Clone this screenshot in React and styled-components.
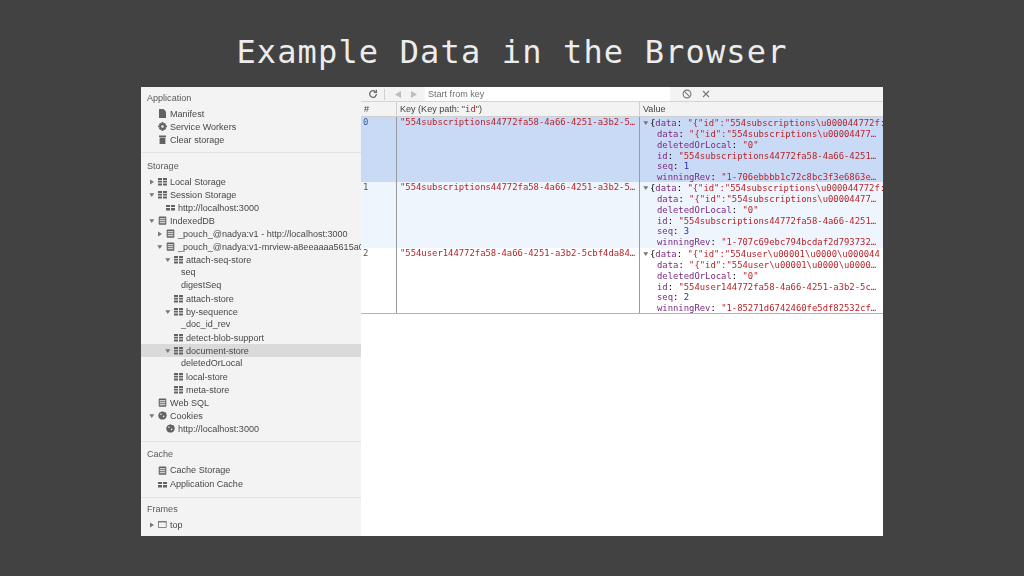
import React from 'react';
import styled, { createGlobalStyle } from 'styled-components';

const Global = createGlobalStyle`
  html, body { margin: 0; padding: 0; background: #424242; }
`;

const Page = styled.div`
  width: 1024px;
  height: 576px;
  overflow: hidden;
  display: flex;
  flex-direction: column;
  align-items: center;
  background: #424242;
`;

const Title = styled.h1`
  margin: 0;
  height: 87px;
  padding-top: 32px;
  box-sizing: border-box;
  font: 400 32px/40px "DejaVu Sans Mono", monospace;
  letter-spacing: 1.15px;
  color: #ececec;
  white-space: pre;
`;

const Window = styled.div`
  width: 742px;
  height: 449px;
  display: flex;
  background: #fff;
  overflow: hidden;
  filter: blur(0.45px);
`;

const Sidebar = styled.div`
  width: 220px;
  flex: none;
  background: #f3f3f3;
  font: 9.05px "Liberation Sans", sans-serif;
  color: #484848;
  overflow: hidden;
`;

const Section = styled.div`
  padding-bottom: 6px;
  border-bottom: ${p => (p.$last ? 'none' : '1px solid #e2e2e2')};
`;

const SectionLabel = styled.div`
  height: 13px;
  line-height: 13px;
  padding-left: 6px;
  margin: ${p => p.$top}px 0 ${p => p.$bottom}px;
  color: #5a5a5a;
`;

const Row = styled.div`
  height: ${p => p.$h || 13}px;
  display: flex;
  align-items: center;
  padding-left: ${p => 8 + p.$level * 8}px;
  white-space: nowrap;
  background: ${p => (p.$active ? '#dadada' : 'transparent')};
`;

const Caret = styled.span`
  width: 9px;
  flex: none;
  display: flex;
  align-items: center;
  color: #777;
`;

const IconSlot = styled.span`
  width: 9px;
  margin-right: 3px;
  flex: none;
  display: flex;
  align-items: center;
  color: #626262;
`;

const FieldRow = styled.div`
  height: 13px;
  line-height: 13px;
  padding-left: 40px;
  white-space: nowrap;
`;

const Main = styled.div`
  flex: 1;
  min-width: 0;
  display: flex;
  flex-direction: column;
`;

const Toolbar = styled.div`
  height: 15px;
  box-sizing: border-box;
  flex: none;
  display: flex;
  align-items: center;
  background: #f3f3f3;
  border-bottom: 1px solid #d4d4d4;
  color: #666;
`;

const ToolButton = styled.span`
  width: ${p => p.$w}px;
  flex: none;
  display: flex;
  justify-content: center;
  align-items: center;
`;

const ToolDivider = styled.span`
  width: 1px;
  height: 11px;
  background: #d0d0d0;
  flex: none;
`;

const KeyInput = styled.div`
  width: 245px;
  height: 14px;
  flex: none;
  background: #fff;
  padding-left: 3px;
  box-sizing: border-box;
  font: 9.05px/14px "Liberation Sans", sans-serif;
  color: #6e6e6e;
`;

const Grid = styled.div`
  display: grid;
  grid-template-columns: 36px 243px 1fr;
`;

const HeadCell = styled.div`
  height: 15px;
  box-sizing: border-box;
  padding-left: ${p => p.$pl}px;
  background: #f3f3f3;
  border-bottom: 1px solid #cfcfcf;
  border-right: ${p => (p.$end ? 'none' : '1px solid #cfcfcf')};
  font: 9.05px/14px "Liberation Sans", sans-serif;
  color: #444;
  white-space: nowrap;
`;

const HeadKey = styled.span`
  font: 400 8.9px/14px "DejaVu Sans Mono", monospace;
  color: #b8242a;
`;

const Cell = styled.div`
  height: ${p => p.$h}px;
  box-sizing: border-box;
  overflow: hidden;
  white-space: pre;
  background: ${p => p.$bg};
  border-right: ${p => (p.$end ? 'none' : '1px solid #9a9a9a')};
  padding-left: ${p => p.$pl}px;
  font: 8.9px/11px "DejaVu Sans Mono", monospace;
`;

const IndexText = styled.span`
  color: ${p => p.$color};
`;

const Str = styled.span`
  color: #b8242a;
`;

const Prop = styled.span`
  color: #7a2a80;
`;

const Num = styled.span`
  color: #2a1ec0;
`;

const Line = styled.div`
  height: ${p => p.$h || 10.8}px;
  line-height: ${p => p.$h || 10.8}px;
  padding-left: ${p => p.$pl}px;
  display: flex;
  align-items: center;
  overflow: hidden;
`;

const ValueCaret = styled.span`
  width: 7px;
  flex: none;
  display: flex;
  color: #777;
`;

const TableEnd = styled.div`
  height: 1px;
  background: #b5b5b5;
`;

const Empty = styled.div`
  flex: 1;
  background: #fff;
`;

const CaretIcon = ({ open }) => (
  <svg width="6" height="6" viewBox="0 0 6 6">
    <path d={open ? 'M0.3 1.2H5.3L2.8 5z' : 'M1 0.5L5 3L1 5.5z'} fill="currentColor" />
  </svg>
);

const Glyph = ({ d }) => (
  <svg width="9" height="9" viewBox="0 0 9 9">
    <path d={d} fill="currentColor" />
  </svg>
);

const icons = {
  grid: 'M0 1H4V3H0zM5 1H9V3H5zM0 3.8H4V5.6H0zM5 3.8H9V5.6H5zM0 6.4H4V8.4H0zM5 6.4H9V8.4H5z',
  smallGrid: 'M0 2H4V4H0zM5 2H9V4H5zM0 5H4V7.4H0zM5 5H9V7.4H5z',
  doc: 'M1 0H5.5L8 2.5V9H1z',
  gear: 'M3.7 0H5.3L5.6 1.5L6.8 .9L8 2.2L7.3 3.3L9 3.7V5.3L7.4 5.6L8.1 6.8L6.8 8L5.6 7.4L5.3 9H3.7L3.4 7.4L2.2 8.1L1 6.8L1.7 5.6L0 5.3V3.7L1.6 3.4L.9 2.2L2.2 1L3.4 1.6zM4.5 3.2A1.3 1.3 0 1 0 4.5 5.8A1.3 1.3 0 1 0 4.5 3.2z',
  trash: 'M1 0.6H8V2H1zM1.6 2.4H7.4V9H1.6z',
  db: 'M1.5 .5H7.5Q8.3 .5 8.3 1.3V8Q8.3 8.8 7.5 8.8H1.5Q.7 8.8 .7 8V1.3Q.7 .5 1.5 .5zM1.7 2.2V3.2H7.3V2.2zM1.7 4.2V5.2H7.3V4.2zM1.7 6.2V7.2H7.3V6.2z',
  cookie: 'M4.5 .2L6 1L8 1.6L8.8 4.5L8 7L6 8.5H3L.8 7L.2 4L1.5 1.4zM3 2.5A.8.8 0 1 0 3 4.1A.8.8 0 1 0 3 2.5zM5.6 4.6A.8.8 0 1 0 5.6 6.2A.8.8 0 1 0 5.6 4.6z',
};

const FrameIcon = () => (
  <svg width="10" height="9" viewBox="0 0 10 9">
    <rect x=".5" y="1" width="8.6" height="6.8" fill="none" stroke="currentColor" strokeWidth=".8" />
    <path d="M.5 1H9.1V2.4H.5z" fill="currentColor" opacity=".6" />
  </svg>
);

const TreeRow = ({ level = 0, caret, icon, label, active, h }) => (
  <Row $level={level} $active={active} $h={h}>
    <Caret>{caret && <CaretIcon open={caret === 'open'} />}</Caret>
    <IconSlot><Glyph d={icons[icon]} /></IconSlot>
    {label}
  </Row>
);

const storageRows = [
  { caret: 'closed', icon: 'grid', label: 'Local Storage' },
  { caret: 'open', icon: 'grid', label: 'Session Storage' },
  { level: 1, icon: 'smallGrid', label: 'http://localhost:3000' },
  { caret: 'open', icon: 'db', label: 'IndexedDB' },
  { level: 1, caret: 'closed', icon: 'db', label: '_pouch_@nadya:v1 - http://localhost:3000' },
  { level: 1, caret: 'open', icon: 'db', label: '_pouch_@nadya:v1-mrview-a8eeaaaa5615a01' },
  { level: 2, caret: 'open', icon: 'grid', label: 'attach-seq-store' },
  { field: 'seq' },
  { field: 'digestSeq' },
  { level: 2, icon: 'grid', label: 'attach-store' },
  { level: 2, caret: 'open', icon: 'grid', label: 'by-sequence' },
  { field: '_doc_id_rev' },
  { level: 2, icon: 'grid', label: 'detect-blob-support' },
  { level: 2, caret: 'open', icon: 'grid', label: 'document-store', active: true },
  { field: 'deletedOrLocal' },
  { level: 2, icon: 'grid', label: 'local-store' },
  { level: 2, icon: 'grid', label: 'meta-store' },
  { icon: 'db', label: 'Web SQL' },
  { caret: 'open', icon: 'cookie', label: 'Cookies' },
  { level: 1, icon: 'cookie', label: 'http://localhost:3000' },
];

const tableRows = [
  {
    index: '0',
    indexColor: '#2f5f9c',
    bg: '#c9daf6',
    h: 65,
    key: '"554subscriptions44772fa58-4a66-4251-a3b2-5…',
    first: '{"id":"554subscriptions\\u000044772f:',
    data: '"{"id":"554subscriptions\\u00004477…',
    id: '"554subscriptions44772fa58-4a66-4251…',
    seq: '1',
    rev: '"1-706ebbbb1c72c8bc3f3e6863e…',
  },
  {
    index: '1',
    indexColor: '#555',
    bg: '#eef5fd',
    h: 66,
    key: '"554subscriptions44772fa58-4a66-4251-a3b2-5…',
    first: '{"id":"554subscriptions\\u000044772f:',
    data: '"{"id":"554subscriptions\\u00004477…',
    id: '"554subscriptions44772fa58-4a66-4251…',
    seq: '3',
    rev: '"1-707c69ebc794bcdaf2d793732…',
  },
  {
    index: '2',
    indexColor: '#555',
    bg: '#ffffff',
    h: 65,
    key: '"554user144772fa58-4a66-4251-a3b2-5cbf4da84…',
    first: '{"id":"554user\\u00001\\u0000\\u000044',
    data: '"{"id":"554user\\u00001\\u0000\\u0000…',
    id: '"554user144772fa58-4a66-4251-a3b2-5c…',
    seq: '2',
    rev: '"1-85271d6742460fe5df82532cf…',
  },
];

const TableRow = ({ row }) => (
  <>
    <Cell $h={row.h} $bg={row.bg} $pl={2}>
      <IndexText $color={row.indexColor}>{row.index}</IndexText>
    </Cell>
    <Cell $h={row.h} $bg={row.bg} $pl={3}><Str>{row.key}</Str></Cell>
    <Cell $h={row.h} $bg={row.bg} $pl={3} $end>
      <Line $pl={0} $h={12}>
        <ValueCaret><CaretIcon open /></ValueCaret>
        <span>{'{'}<Prop>data</Prop>: <Str>"{row.first}</Str></span>
      </Line>
      <Line $pl={14}><span><Prop>data</Prop>: <Str>{row.data}</Str></span></Line>
      <Line $pl={14}><span><Prop>deletedOrLocal</Prop>: <Str>"0"</Str></span></Line>
      <Line $pl={14}><span><Prop>id</Prop>: <Str>{row.id}</Str></span></Line>
      <Line $pl={14}><span><Prop>seq</Prop>: <Num>{row.seq}</Num></span></Line>
      <Line $pl={14}><span><Prop>winningRev</Prop>: <Str>{row.rev}</Str></span></Line>
    </Cell>
  </>
);

export default function App() {
  return (
    <Page>
      <Global />
      <Title>Example Data in the Browser</Title>
      <Window>
        <Sidebar>
          <Section>
            <SectionLabel $top={5} $bottom={2}>Application</SectionLabel>
            <TreeRow icon="doc" label="Manifest" />
            <TreeRow icon="gear" label="Service Workers" />
            <TreeRow icon="trash" label="Clear storage" />
          </Section>
          <Section>
            <SectionLabel $top={7} $bottom={2}>Storage</SectionLabel>
            {storageRows.map((r, i) =>
              r.field
                ? <FieldRow key={i}>{r.field}</FieldRow>
                : <TreeRow key={i} {...r} />
            )}
          </Section>
          <Section>
            <SectionLabel $top={6} $bottom={2}>Cache</SectionLabel>
            <TreeRow icon="db" label="Cache Storage" h={14} />
            <TreeRow icon="smallGrid" label="Application Cache" h={14} />
          </Section>
          <Section $last>
            <SectionLabel $top={5} $bottom={2}>Frames</SectionLabel>
            <Row $level={0}>
              <Caret><CaretIcon /></Caret>
              <IconSlot><FrameIcon /></IconSlot>
              top
            </Row>
          </Section>
        </Sidebar>
        <Main>
          <Toolbar>
            <ToolButton $w={23}>
              <svg width="10" height="10" viewBox="0 0 24 24" fill="none" stroke="currentColor" strokeWidth="3">
                <path d="M20 12a8 8 0 1 1-2.5-5.8" />
                <path d="M20 2v6h-6" />
              </svg>
            </ToolButton>
            <ToolDivider />
            <ToolButton $w={25}>
              <svg width="6" height="7" viewBox="0 0 6 7"><path d="M6 0V7L0 3.5z" fill="#bdbdbd" /></svg>
            </ToolButton>
            <ToolButton $w={8}>
              <svg width="6" height="7" viewBox="0 0 6 7"><path d="M0 0V7L6 3.5z" fill="#bdbdbd" /></svg>
            </ToolButton>
            <ToolButton $w={7} />
            <KeyInput>Start from key</KeyInput>
            <ToolButton $w={3} />
            <ToolButton $w={28}>
              <svg width="10" height="10" viewBox="0 0 10 10" fill="none" stroke="#777" strokeWidth="1.1">
                <circle cx="5" cy="5" r="3.9" />
                <path d="M2.2 2.2L7.8 7.8" />
              </svg>
            </ToolButton>
            <ToolButton $w={10}>
              <svg width="8" height="8" viewBox="0 0 8 8" stroke="#777" strokeWidth="1.1">
                <path d="M1 1L7 7M7 1L1 7" />
              </svg>
            </ToolButton>
          </Toolbar>
          <Grid>
            <HeadCell $pl={3}>#</HeadCell>
            <HeadCell $pl={3}>Key (Key path: "<HeadKey>id</HeadKey>")</HeadCell>
            <HeadCell $pl={3} $end>Value</HeadCell>
            {tableRows.map(row => <TableRow key={row.index} row={row} />)}
          </Grid>
          <TableEnd />
          <Empty />
        </Main>
      </Window>
    </Page>
  );
}
